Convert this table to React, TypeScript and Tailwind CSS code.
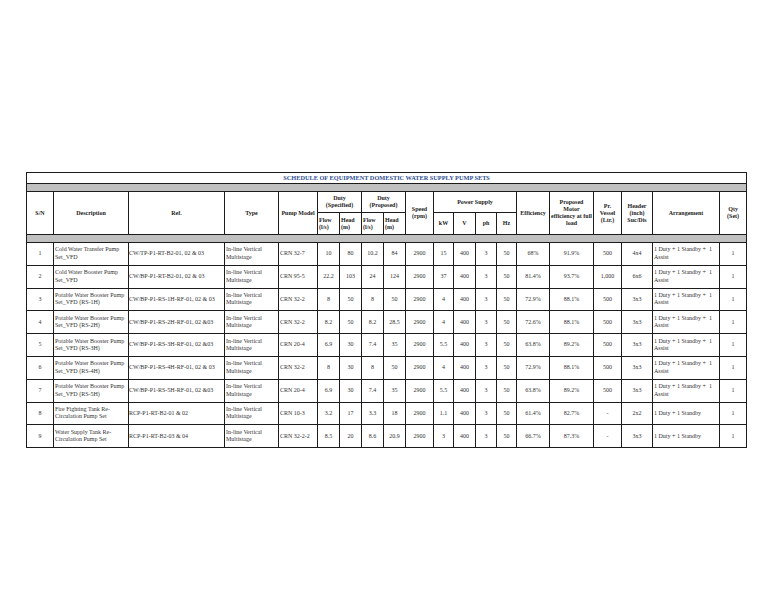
import React from 'react';

type Row = {
  sn: string;
  desc: [string, string];
  ref: string;
  model: string;
  vals: string[]; // flow, head, flow, head, speed, kw, v, ph, hz, eff, motorEff, vessel, header
  arrangement: [string, string?];
};

const assist: [string, string] = ['1 Duty + 1 Standby +  1', 'Assist'];
const standby: [string] = ['1 Duty + 1 Standby'];

const rows: Row[] = [
  { sn: '1', desc: ['Cold Water Transfer Pump', 'Set_VFD'], ref: 'CW/TP-P1-RT-B2-01, 02 & 03', model: 'CRN 32-7', vals: ['10', '80', '10.2', '84', '2900', '15', '400', '3', '50', '68%', '91.9%', '500', '4x4'], arrangement: assist },
  { sn: '2', desc: ['Cold Water Booster Pump', 'Set_VFD'], ref: 'CW/BP-P1-RT-B2-01, 02 & 03', model: 'CRN 95-5', vals: ['22.2', '103', '24', '124', '2900', '37', '400', '3', '50', '81.4%', '93.7%', '1,000', '6x6'], arrangement: assist },
  { sn: '3', desc: ['Potable Water Booster Pump', 'Set_VFD (RS-1H)'], ref: 'CW/BP-P1-RS-1H-RF-01, 02 & 03', model: 'CRN 32-2', vals: ['8', '50', '8', '50', '2900', '4', '400', '3', '50', '72.9%', '88.1%', '500', '3x3'], arrangement: assist },
  { sn: '4', desc: ['Potable Water Booster Pump', 'Set_VFD (RS-2H)'], ref: 'CW/BP-P1-RS-2H-RF-01, 02 &03', model: 'CRN 32-2', vals: ['8.2', '50', '8.2', '28.5', '2900', '4', '400', '3', '50', '72.6%', '88.1%', '500', '3x3'], arrangement: assist },
  { sn: '5', desc: ['Potable Water Booster Pump', 'Set_VFD (RS-3H)'], ref: 'CW/BP-P1-RS-3H-RF-01, 02 &03', model: 'CRN 20-4', vals: ['6.9', '30', '7.4', '35', '2900', '5.5', '400', '3', '50', '63.8%', '89.2%', '500', '3x3'], arrangement: assist },
  { sn: '6', desc: ['Potable Water Booster Pump', 'Set_VFD (RS-4H)'], ref: 'CW/BP-P1-RS-4H-RF-01, 02 & 03', model: 'CRN 32-2', vals: ['8', '30', '8', '50', '2900', '4', '400', '3', '50', '72.9%', '88.1%', '500', '3x3'], arrangement: assist },
  { sn: '7', desc: ['Potable Water Booster Pump', 'Set_VFD (RS-5H)'], ref: 'CW/BP-P1-RS-5H-RF-01, 02 &03', model: 'CRN 20-4', vals: ['6.9', '30', '7.4', '35', '2900', '5.5', '400', '3', '50', '63.8%', '89.2%', '500', '3x3'], arrangement: assist },
  { sn: '8', desc: ['Fire Fighting Tank Re-', 'Circulation Pump Set'], ref: 'RCP-P1-RT-B2-01 & 02', model: 'CRN 10-3', vals: ['3.2', '17', '3.3', '18', '2900', '1.1', '400', '3', '50', '61.4%', '82.7%', '-', '2x2'], arrangement: standby },
  { sn: '9', desc: ['Water Supply Tank Re-', 'Circulation Pump Set'], ref: 'RCP-P1-RT-B2-03 & 04', model: 'CRN 32-2-2', vals: ['8.5', '20', '8.6', '20.9', '2900', '3', '400', '3', '50', '66.7%', '87.3%', '-', '3x3'], arrangement: standby },
];

const cell = 'border border-[#1c1c1c] p-0 align-middle';
const th = `${cell} font-bold text-center leading-[7px]`;

export default function App() {
  return (
    <div className="min-h-[594px] w-[768px] bg-white pt-[172px] pl-[26px] font-['Liberation_Serif',serif] text-[6px] text-[#333]">
      <table className="table-fixed border-collapse w-[720px]">
        <colgroup>
          <col className="w-[27px]" />
          <col className="w-[75px]" />
          <col className="w-[96px]" />
          <col className="w-[54px]" />
          <col className="w-[39px]" />
          <col className="w-[22px]" />
          <col className="w-[22px]" />
          <col className="w-[22px]" />
          <col className="w-[22px]" />
          <col className="w-[28px]" />
          <col className="w-[20px]" />
          <col className="w-[22px]" />
          <col className="w-[21px]" />
          <col className="w-[20px]" />
          <col className="w-[33px]" />
          <col className="w-[44px]" />
          <col className="w-[28px]" />
          <col className="w-[31px]" />
          <col className="w-[67px]" />
          <col className="w-[27px]" />
        </colgroup>
        <thead>
          <tr className="h-[11px]">
            <td colSpan={20} className={`${cell} text-center text-[6.3px] font-bold text-[#2f4f93] leading-none whitespace-nowrap`}>
              SCHEDULE OF EQUIPMENT DOMESTIC WATER SUPPLY PUMP SETS
            </td>
          </tr>
          <tr className="h-[8px]">
            <td colSpan={20} className={`${cell} bg-[#c0c0c0]`} />
          </tr>
          <tr className="h-[21px] text-[#222]">
            <th rowSpan={2} className={th}>S/N</th>
            <th rowSpan={2} className={th}>Description</th>
            <th rowSpan={2} className={th}>Ref.</th>
            <th rowSpan={2} className={th}>Type</th>
            <th rowSpan={2} className={`${th} whitespace-nowrap`}>Pump Model</th>
            <th colSpan={2} className={th}>Duty<br />(Specified)</th>
            <th colSpan={2} className={th}>Duty<br />(Proposed)</th>
            <th rowSpan={2} className={th}>Speed<br />(rpm)</th>
            <th colSpan={4} className={th}>Power Supply</th>
            <th rowSpan={2} className={`${th} whitespace-nowrap`}>Efficiency</th>
            <th rowSpan={2} className={`${th} whitespace-nowrap`}>Proposed<br />Motor<br />efficiency at full<br />load</th>
            <th rowSpan={2} className={th}>Pr.<br />Vessel<br />(Ltr.)</th>
            <th rowSpan={2} className={th}>Header<br />(inch)<br />Suc/Dis</th>
            <th rowSpan={2} className={th}>Arrangement</th>
            <th rowSpan={2} className={th}>Qty<br />(Set)</th>
          </tr>
          <tr className="h-[22px] text-[#222]">
            <th className={`${th} text-left pl-[1px]`}>Flow<br />(l/s)</th>
            <th className={`${th} text-left pl-[1px]`}>Head<br />(m)</th>
            <th className={`${th} text-left pl-[1px]`}>Flow<br />(l/s)</th>
            <th className={`${th} text-left pl-[1px]`}>Head<br />(m)</th>
            <th className={th}>kW</th>
            <th className={th}>V</th>
            <th className={th}>ph</th>
            <th className={th}>Hz</th>
          </tr>
          <tr className="h-[8px]">
            <td colSpan={20} className={`${cell} bg-[#c0c0c0]`} />
          </tr>
        </thead>
        <tbody>
          {rows.map((r) => (
            <tr key={r.sn} className="h-[22.8px] leading-[7.5px]">
              <td className={`${cell} text-center`}>{r.sn}</td>
              <td className={`${cell} pl-[1px] whitespace-nowrap`}>
                {r.desc[0]}
                <br />
                {r.desc[1]}
              </td>
              <td className={`${cell} whitespace-nowrap`}>{r.ref}</td>
              <td className={`${cell} pl-[1px] whitespace-nowrap`}>
                In-line Vertical
                <br />
                Multistage
              </td>
              <td className={`${cell} pl-[1px] whitespace-nowrap`}>{r.model}</td>
              {r.vals.map((v, i) => (
                <td key={i} className={`${cell} text-center whitespace-nowrap`}>{v}</td>
              ))}
              <td className={`${cell} pl-[1px] whitespace-pre`}>
                {r.arrangement[0]}
                {r.arrangement[1] && (
                  <>
                    <br />
                    {r.arrangement[1]}
                  </>
                )}
              </td>
              <td className={`${cell} text-center`}>1</td>
            </tr>
          ))}
        </tbody>
      </table>
    </div>
  );
}
